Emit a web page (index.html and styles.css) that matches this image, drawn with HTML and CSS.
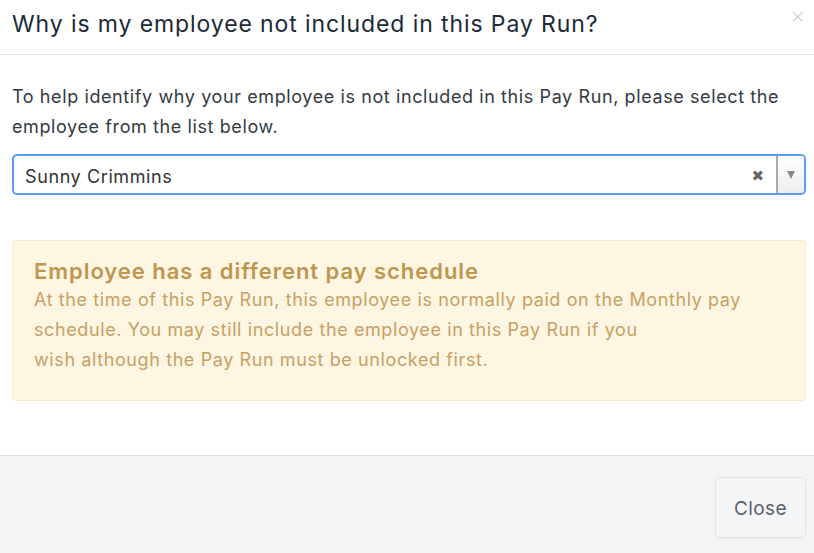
FILE: index.html
```html
<!DOCTYPE html>
<html>
<head>
<meta charset="utf-8">
<link rel="stylesheet" href="styles.css">
</head>
<body>
<div class="modal">
  <div class="modal-header">
    <h4 class="modal-title">Why is my employee not included in this Pay Run?</h4>
    <span class="close-x">×</span>
  </div>
  <div class="modal-body">
    <p class="intro">To help identify why your employee is not included in this Pay Run, please select the employee from the list below.</p>
    <div class="select">
      <span class="select-value">Sunny Crimmins</span>
      <span class="select-clear">✖</span>
      <span class="select-arrow"><span class="caret"></span></span>
    </div>
    <div class="alert">
      <h4 class="alert-title">Employee has a different pay schedule</h4>
      <p class="alert-text">At the time of this Pay Run, this employee is normally paid on the Monthly pay schedule. You may still include the employee in this Pay Run if you<br>wish although the Pay Run must be unlocked first.</p>
    </div>
  </div>
  <div class="modal-footer">
    <button class="btn">Close</button>
  </div>
</div>
</body>
</html>
```
FILE: styles.css
```css
html, body {
  margin: 0;
  padding: 0;
  background: #fff;
}
body {
  font-family: Inter, "Open Sans", sans-serif;
  width: 814px;
  height: 553px;
  overflow: hidden;
}
.modal {
  display: flex;
  flex-direction: column;
  height: 553px;
}
.modal-header {
  height: 55px;
  border-bottom: 1px solid #e5e5e5;
  display: flex;
  align-items: flex-start;
  justify-content: space-between;
  padding: 0 8px 0 12px;
  box-sizing: border-box;
}
.modal-title {
  margin: 8px 0 0;
  font-size: 23px;
  line-height: 32px;
  font-weight: 400;
  color: #1c2a38;
  letter-spacing: 0.9px;
}
.close-x {
  color: #c8c8c8;
  font-size: 20px;
  line-height: 1;
  margin-top: 6px;
  font-family: "DejaVu Sans", sans-serif;
  font-weight: 300;
}
.modal-body {
  flex: 1;
  padding: 0 8px 0 12px;
}
.intro {
  margin: 27px 0 0;
  font-size: 18px;
  line-height: 30px;
  color: #333a42;
  letter-spacing: 0.6px;
}
.select {
  margin-top: 12px;
  height: 41px;
  box-sizing: border-box;
  border: 2px solid #5b9cf0;
  border-radius: 5px;
  display: flex;
  align-items: stretch;
  background: #fff;
}
.select-value {
  flex: 1;
  font-size: 18px;
  color: #333;
  padding: 3px 0 0 11px;
  letter-spacing: 0.6px;
  display: flex;
  align-items: center;
}
.select-clear {
  color: #666;
  font-size: 15px;
  display: flex;
  align-items: center;
  padding: 2px 12px 0 0;
  font-family: "DejaVu Sans", sans-serif;
}
.select-arrow {
  width: 26px;
  border-left: 2px solid #aaa;
  background: linear-gradient(#fff, #eee);
  border-radius: 0 3px 3px 0;
  display: flex;
  align-items: center;
  justify-content: center;
}
.caret {
  width: 0;
  height: 0;
  border-left: 4px solid transparent;
  border-right: 4px solid transparent;
  border-top: 8px solid #888;
}
.alert {
  margin-top: 45px;
  height: 161px;
  box-sizing: border-box;
  background: #fcf6e2;
  border: 1px solid #faebcc;
  border-radius: 4px;
  padding: 16px 21px;
}
.alert-title {
  margin: 0;
  font-size: 22px;
  font-weight: 600;
  color: #c0964f;
  line-height: 28px;
  letter-spacing: 0.95px;
}
.alert-text {
  margin: 0;
  font-size: 18px;
  line-height: 30px;
  color: #c9a064;
  letter-spacing: 0.6px;
}
.modal-footer {
  height: 98px;
  background: #f4f4f4;
  border-top: 1px solid #ddd;
  box-sizing: border-box;
  display: flex;
  justify-content: flex-end;
  align-items: flex-start;
  padding: 21px 8px 0 0;
}
.btn {
  width: 91px;
  height: 61px;
  padding-top: 3px;
  background: #f4f5f7;
  border: 1px solid #e1e3e8;
  border-radius: 5px;
  font-family: Inter, "Open Sans", sans-serif;
  font-size: 19px;
  letter-spacing: 0.4px;
  color: #5a626c;
  box-shadow: 0 1px 1px rgba(0,0,0,0.05);
}
```
